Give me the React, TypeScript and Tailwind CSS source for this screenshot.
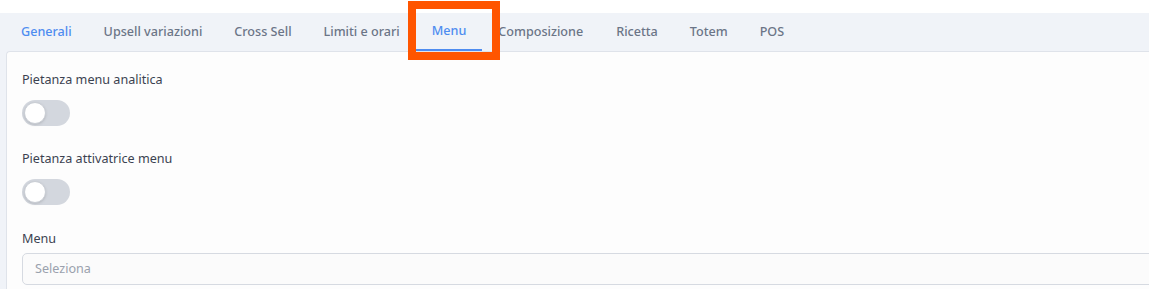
import { useState } from "react";

const tabs = [
  "Generali",
  "Upsell variazioni",
  "Cross Sell",
  "Limiti e orari",
  "Menu",
  "Composizione",
  "Ricetta",
  "Totem",
  "POS",
];

// Simple off-state switch like the product form
const Toggle = ({ on, onChange }: { on: boolean; onChange: () => void }) => (
  <button
    type="button"
    onClick={onChange}
    className={`relative flex h-[26px] w-[48px] items-center rounded-full px-[2px] ${
      on ? "bg-[#4e8cf0] justify-end" : "bg-[#d3d7de] justify-start"
    }`}
  >
    <span className="block h-[22px] w-[22px] rounded-full border border-[#c9cdd4] bg-white shadow-sm" />
  </button>
);

export default function App() {
  const [active] = useState("Menu");
  const [analitica, setAnalitica] = useState(false);
  const [attivatrice, setAttivatrice] = useState(false);

  return (
    <div
      className="relative h-[289px] w-full overflow-hidden bg-white"
      style={{ fontFamily: '"Noto Sans", "Open Sans", sans-serif' }}
    >
      <div className="mt-[13px] min-w-[1180px] bg-[#f0f3f8]">
        {/* tabs */}
        <div className="flex h-[38px] pl-[5px]">
          {tabs.map((t) => (
            <div
              key={t}
              className={`flex items-center px-4 text-[12.6px] font-medium ${
                t === active
                  ? "border-b-2 border-[#4e8cf0] text-[#4e8cf0]"
                  : t === "Generali"
                  ? "text-[#4e8cf0]"
                  : "text-[#6b7587]"
              } ${t === "Composizione" ? "pr-[17px]" : ""}`}
            >
              {t}
            </div>
          ))}
        </div>

        {/* panel */}
        <div className="ml-[6px] rounded-tl-[4px] border-l border-t border-[#dfe3ea] bg-[#fdfdfd] pl-[15px] pr-4 pt-[19px]">
          <div className="text-[12.6px] leading-[18px] text-[#3b4250]">Pietanza menu analitica</div>
          <div className="mt-[11px]">
            <Toggle on={analitica} onChange={() => setAnalitica(!analitica)} />
          </div>

          <div className="mt-[24px] text-[12.6px] leading-[18px] text-[#3b4250]">
            Pietanza attivatrice menu
          </div>
          <div className="mt-[11px]">
            <Toggle on={attivatrice} onChange={() => setAttivatrice(!attivatrice)} />
          </div>

          <div className="mt-[25px] text-[12.6px] leading-[18px] text-[#3b4250]">Menu</div>
          <div className="mt-[5px] flex h-[32px] items-center rounded-[5px] border border-[#d6dae1] bg-[#fbfbfb] px-3 text-[12.6px] text-[#9aa1ad]">
            Seleziona
          </div>
          <div className="h-[10px]" />
        </div>
      </div>

      {/* annotation box */}
      <div className="absolute left-[408px] top-[1px] h-[59px] w-[92px] border-8 border-[#ff5500]" />
    </div>
  );
}
